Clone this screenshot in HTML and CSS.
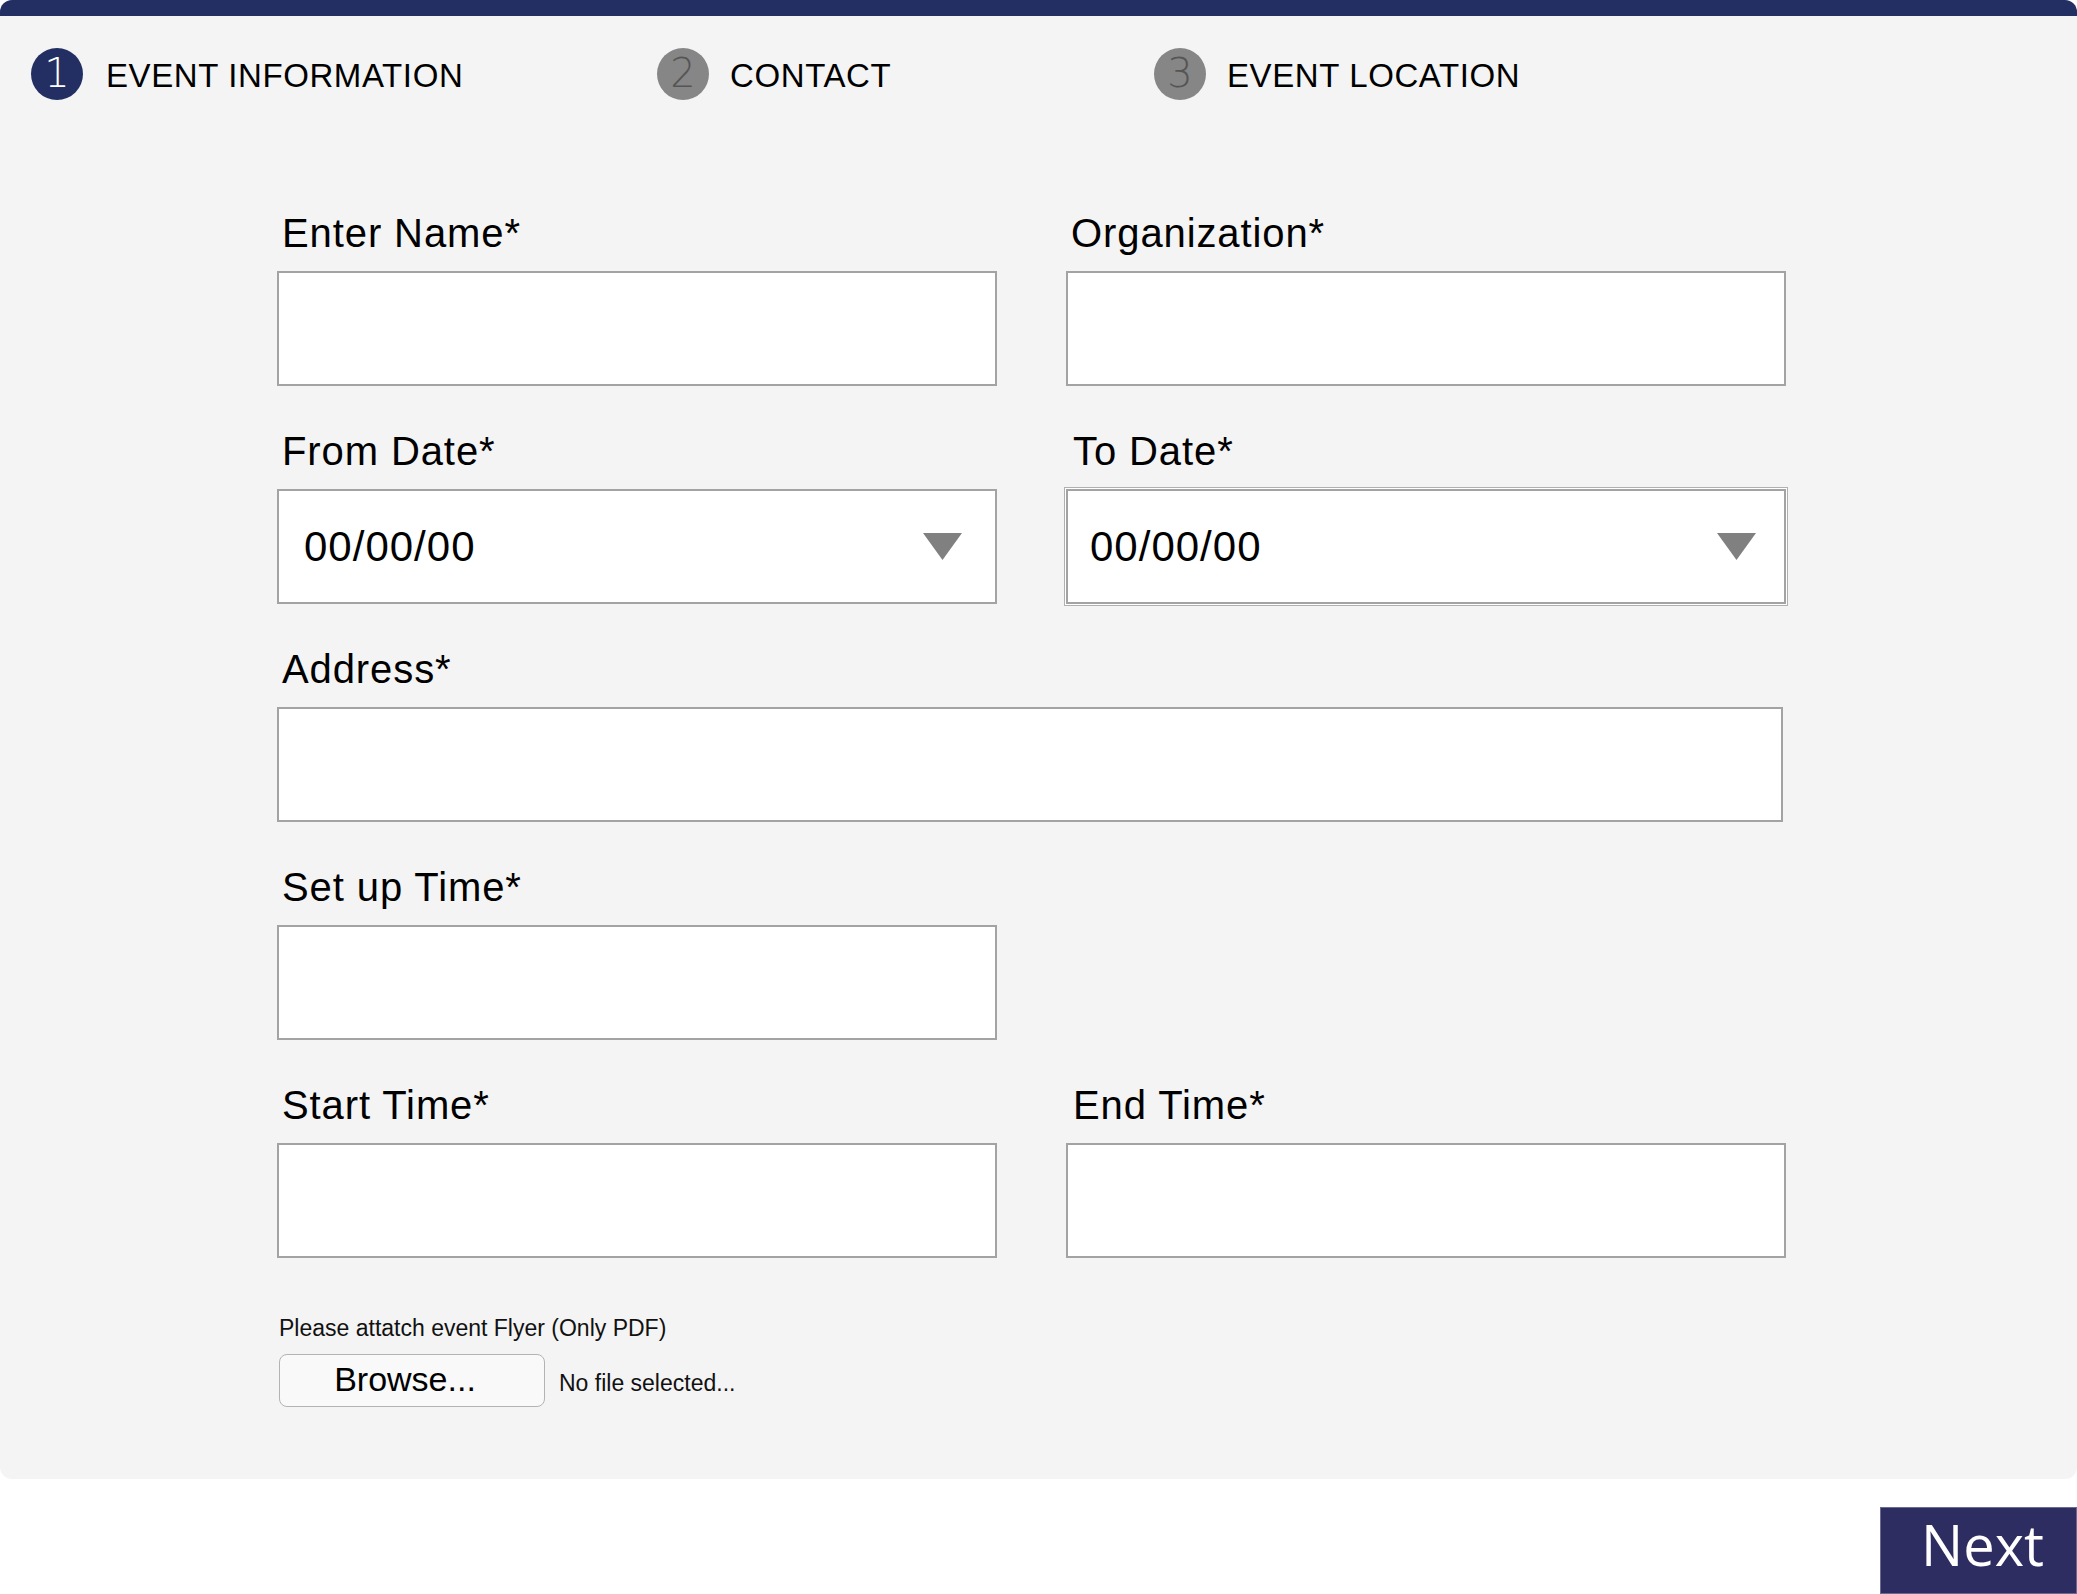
FILE: index.html
```html
<!DOCTYPE html>
<html lang="en">
<head>
<meta charset="utf-8">
<title>Event Registration</title>
<link rel="stylesheet" href="styles.css">
</head>
<body>
<div class="panel">
  <div class="topbar"></div>
  <ol class="steps">
    <li class="step step-active"><span class="step-num">1</span><span class="step-label">EVENT INFORMATION</span></li>
    <li class="step"><span class="step-num">2</span><span class="step-label">CONTACT</span></li>
    <li class="step"><span class="step-num">3</span><span class="step-label">EVENT LOCATION</span></li>
  </ol>
  <form class="form">
    <div class="grid">
      <div class="field">
        <label class="field-label">Enter Name*</label>
        <input class="input" type="text">
      </div>
      <div class="field">
        <label class="field-label">Organization*</label>
        <input class="input" type="text">
      </div>
      <div class="field">
        <label class="field-label">From Date*</label>
        <div class="input select"><span class="select-value">00/00/00</span><svg class="caret" width="39" height="27" viewBox="0 0 39 27"><polygon points="0,0 39,0 19.5,27" fill="#808080"/></svg></div>
      </div>
      <div class="field">
        <label class="field-label field-label-wide">To Date*</label>
        <div class="input select select-double"><span class="select-value">00/00/00</span><svg class="caret" width="39" height="27" viewBox="0 0 39 27"><polygon points="0,0 39,0 19.5,27" fill="#808080"/></svg></div>
      </div>
      <div class="field field-full">
        <label class="field-label">Address*</label>
        <input class="input input-address" type="text">
      </div>
      <div class="field">
        <label class="field-label">Set up Time*</label>
        <input class="input" type="text">
      </div>
      <div class="field field-empty"></div>
      <div class="field">
        <label class="field-label">Start Time*</label>
        <input class="input" type="text">
      </div>
      <div class="field">
        <label class="field-label field-label-wide">End Time*</label>
        <input class="input" type="text">
      </div>
    </div>
    <div class="upload">
      <p class="upload-label">Please attatch event Flyer (Only PDF)</p>
      <div class="upload-row">
        <button type="button" class="browse">Browse...</button>
        <span class="upload-status">No file selected...</span>
      </div>
    </div>
  </form>
</div>
<div class="footer">
  <button type="button" class="next">Next</button>
</div>
</body>
</html>
```

FILE: styles.css
```css
* {
  box-sizing: border-box;
}

html, body {
  margin: 0;
  padding: 0;
  background: #ffffff;
}

body {
  font-family: "Liberation Sans", Arial, sans-serif;
  color: #111111;
  overflow: hidden;
}

.panel {
  background: #f4f4f4;
  border-radius: 12px;
  overflow: hidden;
  padding-bottom: 72px;
}

.topbar {
  height: 16px;
  background: #232f63;
}

.steps {
  list-style: none;
  margin: 0;
  padding: 32px 0 0 31px;
  display: grid;
  grid-template-columns: 626px 497px auto;
  height: 84px;
}

.step {
  display: flex;
  align-items: center;
  gap: 21px;
  height: 52px;
}

.step-num {
  width: 52px;
  height: 52px;
  border-radius: 50%;
  background: #868686;
  color: #555555;
  display: flex;
  align-items: center;
  justify-content: center;
  font-family: "DejaVu Sans", sans-serif;
  font-weight: 200;
  font-size: 40px;
  line-height: 1;
  padding-bottom: 3px;
  flex: none;
}

.step-active .step-num {
  background: #232f63;
  color: #ffffff;
}

.step-label {
  font-size: 33px;
  line-height: 38px;
  letter-spacing: 0.6px;
  color: #000000;
  padding-top: 4px;
}

.step-active .step-label {
  margin-left: 2px;
}

.form {
  padding: 110px 0 0 277px;
}

.grid {
  display: grid;
  grid-template-columns: 720px 720px;
  column-gap: 69px;
  row-gap: 42px;
  width: 1509px;
}

.field {
  display: flex;
  flex-direction: column;
}

.field-full {
  grid-column: 1 / span 2;
}

.field-label {
  font-size: 40px;
  line-height: 46px;
  letter-spacing: 0.9px;
  padding-left: 5px;
  margin-bottom: 15px;
  color: #000000;
}

.field-label-wide {
  padding-left: 7px;
}

.input {
  display: block;
  width: 100%;
  height: 115px;
  margin: 0;
  background: #ffffff;
  border: 2px solid #a3a3a3;
  border-radius: 0;
  outline: none;
  font-family: "Liberation Sans", Arial, sans-serif;
  font-size: 40px;
  padding: 0 22px;
}

.input-address {
  width: 1506px;
}

.select {
  display: flex;
  align-items: center;
  justify-content: space-between;
  padding: 0 33px 0 25px;
  color: #000000;
}

.select-value {
  font-size: 42px;
  line-height: 48px;
  letter-spacing: 1px;
}

.select-double {
  padding-left: 22px;
  padding-right: 28px;
  box-shadow: 0 0 0 1px #ffffff, 0 0 0 2px #b0b0b0;
}

.caret {
  display: block;
  flex: none;
}

.upload {
  margin-top: 57px;
}

.upload-label {
  margin: 0;
  font-size: 23px;
  line-height: 27px;
  padding-left: 2px;
  color: #111111;
}

.upload-row {
  margin-top: 12px;
  display: flex;
  align-items: center;
  gap: 14px;
}

.browse {
  width: 266px;
  height: 53px;
  margin: 0 0 0 2px;
  background: #f9f9f9;
  border: 1px solid #b3b3b3;
  border-radius: 8px;
  font-family: "Liberation Sans", Arial, sans-serif;
  font-size: 34px;
  line-height: 38px;
  color: #000000;
  padding: 0 14px 4px 0;
  display: flex;
  align-items: center;
  justify-content: center;
}

.upload-status {
  font-size: 23px;
  line-height: 27px;
  padding-top: 5px;
  color: #111111;
}

.footer {
  display: flex;
  justify-content: flex-end;
  margin-top: 28px;
}

.next {
  width: 197px;
  height: 87px;
  margin: 0;
  background: #2e2d62;
  border: 1px solid #6a6990;
  border-radius: 0;
  color: #ffffff;
  font-family: "Open Sans", sans-serif;
  font-size: 56px;
  line-height: 76px;
  padding: 0 0 14px 8px;
  display: flex;
  align-items: center;
  justify-content: center;
}
```
